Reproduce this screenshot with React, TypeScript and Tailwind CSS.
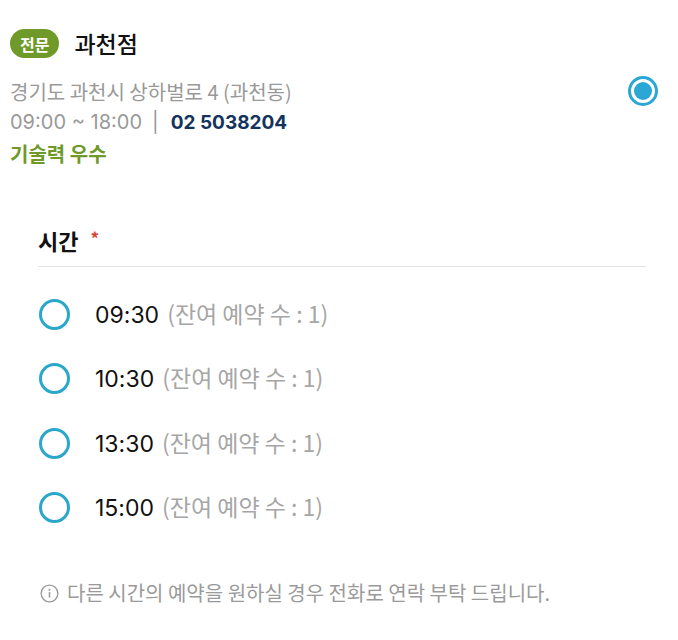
import React, { useState } from 'react';

const slots = ['09:30', '10:30', '13:30', '15:00'];

const kr = { fontFamily: '"Noto Sans CJK KR", "Noto Sans", sans-serif' };
const num = { fontFamily: 'Inter, "Noto Sans CJK KR", sans-serif' };

const App: React.FC = () => {
  const [selected, setSelected] = useState<string | null>(null);

  return (
    <div className="w-[678px] h-[640px] bg-white text-[#111]" style={kr}>
      {/* Branch card */}
      <div className="flex items-center justify-between pl-[10px] pr-[20px] pt-[29px]">
        <div className="flex flex-col">
          <div className="flex items-center gap-[15px]">
            <span className="h-[29px] px-[10px] rounded-full bg-[#6f9a2a] text-white text-[16px] font-bold flex items-center leading-none">
              전문
            </span>
            <span className="text-[23px] font-medium leading-none">과천점</span>
          </div>
          <div className="mt-[18px] text-[20px] text-[#999] leading-[31px]">경기도 과천시 상하벌로 4 (과천동)</div>
          <div className="text-[20px] text-[#999] leading-[31px] flex items-center" style={num}>
            <span>09:00 ~ 18:00</span>
            <span className="mx-[10px]">|</span>
            <span className="ml-[2px] text-[#14345e] font-bold text-[19px]">02 5038204</span>
          </div>
          <div className="text-[20px] text-[#6f9a2a] font-bold leading-[31px]">기술력 우수</div>
        </div>
        <div className="w-[30px] h-[30px] rounded-full border-[3px] border-[#2aa7d4] flex items-center justify-center mb-[16px]">
          <div className="w-[18px] h-[18px] rounded-full bg-[#2aa7d4]" />
        </div>
      </div>

      {/* Time section */}
      <div className="pl-[38px] pr-[32px] mt-[57px]">
        <div className="flex items-center pb-[12px] border-b border-[#e2e2e2]">
          <span className="text-[22px] font-bold leading-[28px]">시간</span>
          <span className="ml-[12px] text-[#d8432f] text-[17px] font-bold leading-none -mt-[6px]">*</span>
        </div>

        <div className="flex flex-col pt-[15px]">
          {slots.map((t) => (
            <button
              key={t}
              onClick={() => setSelected(t)}
              className="flex items-center h-[64.5px] text-left"
            >
              <span className="w-[31px] h-[31px] ml-[1px] rounded-full border-[3px] border-[#2aa7c9] flex items-center justify-center">
                {selected === t && <span className="w-[17px] h-[17px] rounded-full bg-[#2aa7c9]" />}
              </span>
              <span className="ml-[25px] text-[23px] leading-none">
                <span className="text-[#111]" style={num}>{t}</span>
                <span className="text-[#a6a6a6] ml-[8px]">(잔여 예약 수 : 1)</span>
              </span>
            </button>
          ))}
        </div>

        <div className="mt-[38px] flex items-center text-[20px] text-[#9a9a9a]">
          <svg width="19" height="19" viewBox="0 0 20 20" fill="none" className="ml-[2px] mr-[8px]">
            <circle cx="10" cy="10" r="8.8" stroke="#9a9a9a" strokeWidth="1.4" />
            <circle cx="10" cy="6" r="1.1" fill="#9a9a9a" />
            <rect x="9.2" y="8.4" width="1.6" height="6" rx="0.6" fill="#9a9a9a" />
          </svg>
          <span>다른 시간의 예약을 원하실 경우 전화로 연락 부탁 드립니다.</span>
        </div>
      </div>
    </div>
  );
};

export default App;
